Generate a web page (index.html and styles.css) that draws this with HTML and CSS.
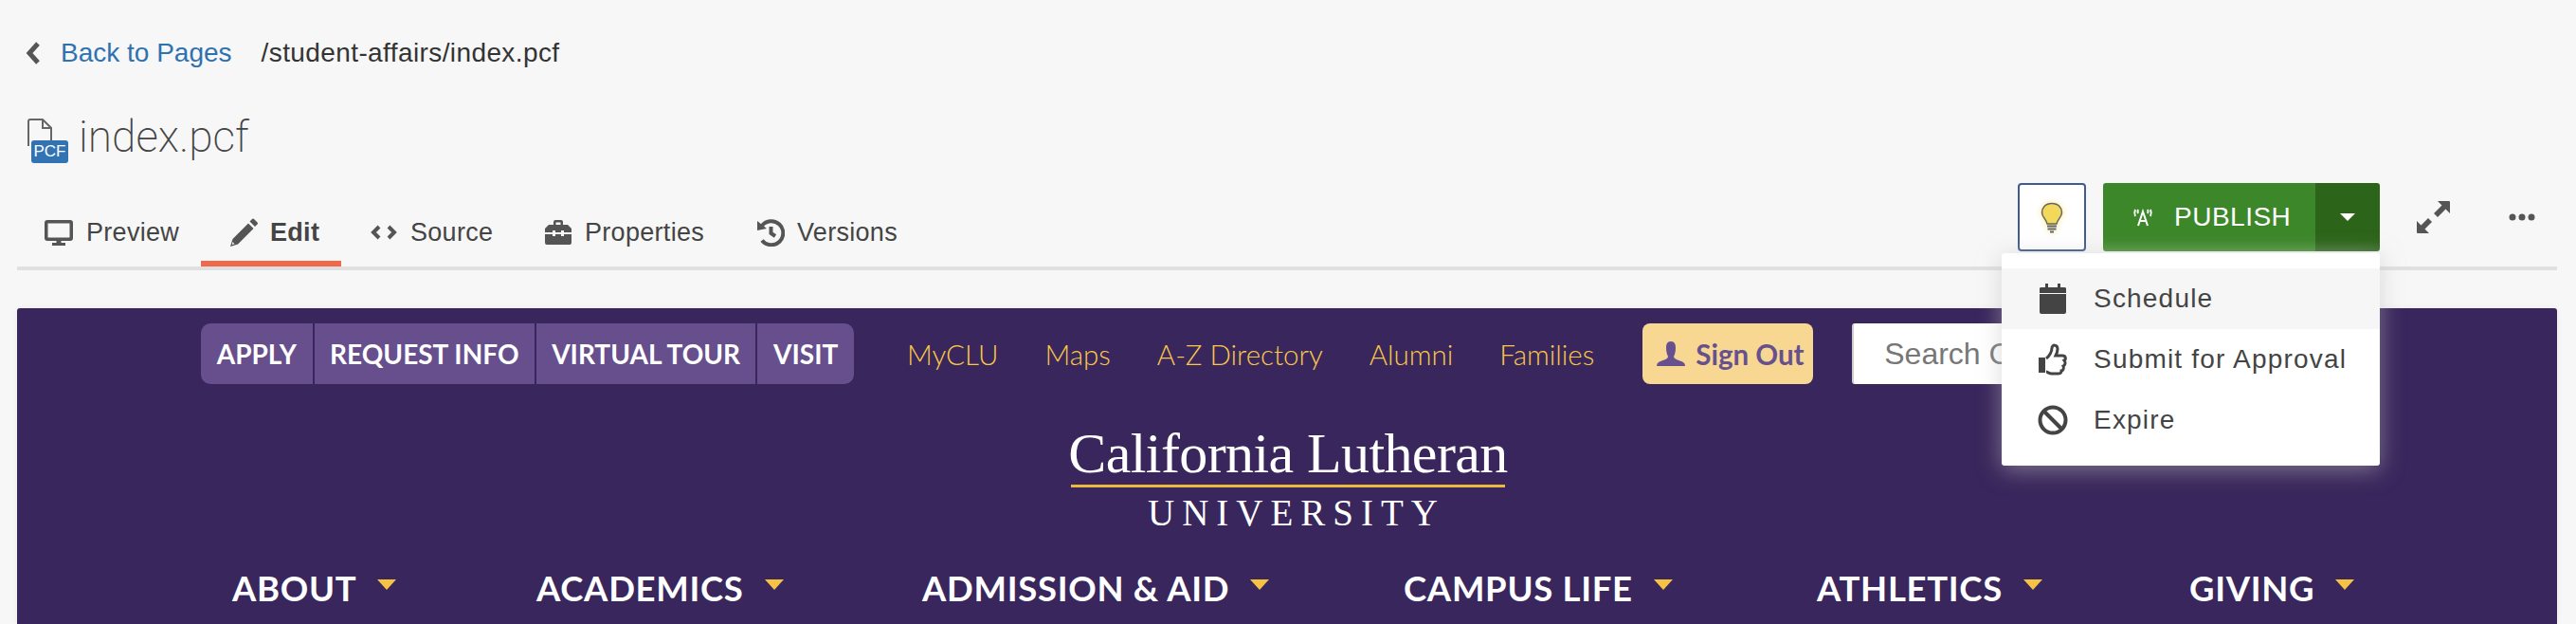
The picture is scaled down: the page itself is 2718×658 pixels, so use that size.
FILE: index.html
```html
<!DOCTYPE html>
<html lang="en">
<head>
  <meta charset="UTF-8" />
  <title>index.pcf</title>
  <link rel="stylesheet" href="styles.css">
</head>
<body>
  <div class="crumbs">
    <svg class="back-icon" viewBox="0 0 18 26"><path d="M14 3 L5 13 L14 23" /></svg>
    <a class="back-link">Back to Pages</a>
    <span class="path">/student-affairs/index.pcf</span>
  </div>

  <div class="title-row">
    <div class="file-icon">
      <svg viewBox="0 0 28 36"><path d="M2 30 V4 Q2 2 4 2 H17 L26 11 V30" /><path d="M17 2 V11 H26" /></svg>
      <span class="file-badge">PCF</span>
    </div>
    <h1 class="title">index.pcf</h1>
  </div>

  <div class="toolbar">
    <ul class="tabs">
      <li class="tab tab-preview">
        <svg viewBox="0 0 30 30"><path d="M3 2 H27 Q30 2 30 5 V21 Q30 24 27 24 H3 Q0 24 0 21 V5 Q0 2 3 2 Z M3.500 5.500 V20.500 H26.500 V5.500 Z M12.500 24 H17.500 V26 H22 V29 H8 V26 H12.500 Z" fill-rule="evenodd" /></svg>
        Preview
      </li>
      <li class="tab tab-edit active">
        <svg viewBox="0 0 30 30"><path d="M21.500 3.500 L24 1 Q25 0 26 1 L29.500 4.500 Q30.500 5.500 29.500 6.500 L27 9 Z" /><path d="M20 5.500 L25.500 11 L9 27.500 L1 30 L3.500 22 Z" /><path class="tip" d="M3.500 25 L5.500 27.200 L2.800 28 Z" /></svg>
        Edit
      </li>
      <li class="tab tab-source">
        <svg class="stroke" viewBox="0 0 30 30"><path d="M10 9 L4 15 L10 21 M20 9 L26 15 L20 21" /></svg>
        Source
      </li>
      <li class="tab tab-props">
        <svg viewBox="0 0 30 30"><path d="M10 7 V4 Q10 2 12 2 H18 Q20 2 20 4 V7 H25 L29 11 V15 H21 V13 H18 V15 H12 V13 H9 V15 H1 V11 L5 7 Z M12.500 4.500 V7 H17.500 V4.500 Z M1 17 H9 V19 H12 V17 H18 V19 H21 V17 H29 V26 Q29 28 27 28 H3 Q1 28 1 26 Z" fill-rule="evenodd" /></svg>
        Properties
      </li>
      <li class="tab tab-versions">
        <svg class="stroke" viewBox="0 0 30 30"><path d="M6 8 A12.500 12.500 0 1 1 6 23.500" /><path d="M15.500 9 V16 L20 19" /><path class="fill" d="M1 3 L11 11 L1 13 Z" /></svg>
        Versions
      </li>
    </ul>

    <div class="actions">
      <button class="bulb-btn">
        <svg viewBox="0 0 24 33"><path class="bulb-glass" d="M12 1.500 C5 1.500 1.500 6.500 1.500 11 C1.500 16 6 18 7 23 H17 C18 18 22.500 16 22.500 11 C22.500 6.500 19 1.500 12 1.500 Z" /><path class="bulb-base" d="M7 25.500 H17 M7.500 28.500 H16.500 M10 31.500 H14" /></svg>
      </button>
      <div class="publish">
        <button class="publish-main">
          <svg viewBox="0 0 24 19"><path d="M7 18 L12 3 L17 18 M9 13 H15" /><path d="M4 1 Q2.500 4.500 4 8 M7 1 Q6 3 7 5 M20 1 Q21.500 4.500 20 8 M17 1 Q18 3 17 5" /></svg>
          PUBLISH
        </button>
        <button class="publish-caret"><span class="caret"></span></button>
        <ul class="publish-menu">
          <li class="menu-item hover">
            <svg viewBox="0 0 32 34"><path d="M8 1 H11 V5 H8 Z M21 1 H24 V5 H21 Z M2 6 Q2 5 4 5 H28 Q30 5 30 6 V11 H2 Z M2 12 H30 V31 Q30 33 28 33 H4 Q2 33 2 31 Z" /></svg>
            Schedule
          </li>
          <li class="menu-item">
            <svg viewBox="0 0 32 34"><path d="M1 15 H8 V31 H1 Z" /><path class="outline" d="M9 16 C12 14 15 9 15 5 C15 1 21 1 21 6 C21 9 20 11 19 13 H26 C30 13 30 17 28 18 C30 20 29 23 27 24 C28 26 27 29 25 29 C25 32 23 32 21 32 H15 C12 32 10 30 9 30" /></svg>
            Submit for Approval
          </li>
          <li class="menu-item">
            <svg class="stroke" viewBox="0 0 32 32"><circle cx="16" cy="16" r="13.500" /><path d="M6.500 6.500 L25.500 25.500" /></svg>
            Expire
          </li>
        </ul>
      </div>
      <svg class="expand-icon" viewBox="0 0 36 36"><path d="M23 1 H35 Q36 1 36 2 V14 L31.500 9.500 L23 18 L19 14 L27.500 5.500 Z" /><path d="M1 22 L5.500 26.500 L13 19 L17 23 L9.500 30.500 L14 35 H2 Q1 35 1 34 Z" /></svg>
      <svg class="more-icon" viewBox="0 0 28 8"><circle cx="4" cy="4" r="3.500" /><circle cx="14" cy="4" r="3.500" /><circle cx="24" cy="4" r="3.500" /></svg>
    </div>
  </div>

  <div class="site">
    <div class="site-top">
      <div class="cta-group">
        <a class="cta cta-apply">APPLY</a>
        <a class="cta cta-info">REQUEST INFO</a>
        <a class="cta cta-tour">VIRTUAL TOUR</a>
        <a class="cta cta-visit">VISIT</a>
      </div>
      <ul class="util-links">
        <li>MyCLU</li>
        <li>Maps</li>
        <li>A-Z Directory</li>
        <li>Alumni</li>
        <li>Families</li>
      </ul>
      <a class="sign-out">
        <svg viewBox="0 0 30 26"><path d="M15 0 C11 0 10 3 10 7 C10 11 11 14 12 16 C12 19 5 20 2 22 Q0 23 0 26 H30 Q30 23 28 22 C25 20 18 19 18 16 C19 14 20 11 20 7 C20 3 19 0 15 0 Z" /></svg>
        Sign Out
      </a>
      <div class="search-box">Search CLU</div>
    </div>

    <div class="logo">
      <div class="logo-name">California Lutheran</div>
      <div class="logo-rule"></div>
      <div class="logo-sub">UNIVERSITY</div>
    </div>

    <ul class="main-nav">
      <li class="nav-about">ABOUT <span class="nav-caret"></span></li>
      <li class="nav-academics">ACADEMICS <span class="nav-caret"></span></li>
      <li class="nav-admission">ADMISSION &amp; AID <span class="nav-caret"></span></li>
      <li class="nav-campus">CAMPUS LIFE <span class="nav-caret"></span></li>
      <li class="nav-athletics">ATHLETICS <span class="nav-caret"></span></li>
      <li class="nav-giving">GIVING <span class="nav-caret"></span></li>
    </ul>
  </div>
</body>
</html>
```

FILE: styles.css
```css
* {
  box-sizing: border-box;
}

body {
  margin: 0;
  height: 658px;
  overflow: hidden;
  background: #f7f7f7;
  color: #444;
  font-family: "Liberation Sans", Arial, sans-serif;
}

ul {
  list-style: none;
  margin: 0;
  padding: 0;
}

button {
  border: none;
  padding: 0;
  font-family: inherit;
}

/* breadcrumb */
.crumbs {
  display: flex;
  align-items: center;
  height: 40px;
  margin-top: 36px;
  padding-left: 26px;
  font-size: 28px;
}

.back-icon {
  width: 18px;
  height: 26px;
  fill: none;
  stroke: #555;
  stroke-width: 5;
}

.back-link {
  margin-left: 20px;
  color: #2f72b0;
}

.path {
  margin-left: 31px;
  color: #333;
  letter-spacing: 0.4px;
}

/* title */
.title-row {
  display: flex;
  align-items: center;
  height: 60px;
  margin-top: 39px;
  padding-left: 28px;
}

.file-icon {
  position: relative;
  width: 44px;
  height: 48px;
  margin-top: 6px;
}

.file-icon svg {
  width: 28px;
  height: 36px;
  fill: none;
  stroke: #666;
  stroke-width: 2;
}

.file-badge {
  position: absolute;
  left: 5px;
  top: 24px;
  width: 39px;
  height: 24px;
  background: #3173b3;
  border-radius: 3px;
  color: #fff;
  font-size: 17px;
  line-height: 24px;
  text-align: center;
}

.title {
  margin: 0 0 2px 11px;
  font-family: Roboto, sans-serif;
  font-weight: 200;
  font-size: 46px;
  color: #444;
}

/* tabs and actions */
.toolbar {
  position: relative;
  display: flex;
  justify-content: space-between;
  height: 110px;
  margin: 0 20px 0 18px;
  border-bottom: 4px solid #e0e0e0;
}

.tabs {
  display: flex;
  align-items: flex-end;
}

.tab {
  display: flex;
  align-items: center;
  gap: 13px;
  height: 72px;
  padding-left: 30px;
  font-size: 27px;
  letter-spacing: 0.3px;
  color: #444;
}

.tab svg {
  width: 30px;
  height: 30px;
  fill: #555;
}

.tab svg.stroke {
  fill: none;
  stroke: #555;
  stroke-width: 4;
}

.tab svg .fill {
  fill: #555;
  stroke: none;
}

.tab svg .tip {
  fill: #f7f7f7;
}

.tab-preview {
  width: 194px;
  padding-left: 29px;
  gap: 14px;
}

.tab-edit {
  width: 148px;
}

.tab-edit.active {
  font-weight: bold;
  box-shadow: inset 0 -6px 0 #f0694a;
}

.tab-source {
  width: 184px;
}

.tab-props {
  width: 224px;
}

.actions {
  display: flex;
  align-items: flex-start;
  margin-top: 18px;
}

.bulb-btn {
  display: flex;
  align-items: center;
  justify-content: center;
  width: 72px;
  height: 72px;
  margin-right: 18px;
  background: #fff;
  border: 2px solid #3e5c8f;
  border-radius: 4px;
}

.bulb-btn svg {
  width: 24px;
  height: 33px;
  filter: drop-shadow(0 0 3px #f7e58a);
}

.bulb-glass {
  fill: #f2d95c;
  stroke: #666;
  stroke-width: 1.500;
}

.bulb-base {
  fill: none;
  stroke: #666;
  stroke-width: 2;
}

.publish {
  position: relative;
  display: flex;
  width: 292px;
  height: 72px;
}

.publish-main {
  display: flex;
  align-items: center;
  gap: 21px;
  width: 224px;
  height: 72px;
  padding-left: 30px;
  background: linear-gradient(#3c872a 85%, #4c923a);
  border-radius: 3px 0 0 3px;
  color: #fff;
  font-size: 28px;
  letter-spacing: 0.5px;
}

.publish-main svg {
  width: 24px;
  height: 19px;
  fill: none;
  stroke: #fff;
  stroke-width: 2;
}

.publish-caret {
  display: flex;
  align-items: center;
  justify-content: center;
  width: 68px;
  height: 72px;
  background: linear-gradient(#2c6519 85%, #3f7030);
  border-radius: 0 3px 3px 0;
}

.caret {
  width: 0;
  height: 0;
  border-left: 8px solid transparent;
  border-right: 8px solid transparent;
  border-top: 8px solid #fff;
}

.publish-menu {
  position: absolute;
  z-index: 5;
  top: 74px;
  right: 0;
  width: 399px;
  height: 224px;
  padding: 16px 0;
  background: #fff;
  border-radius: 3px;
  box-shadow: 0 4px 24px rgba(190, 190, 190, 0.55);
}

.menu-item {
  display: flex;
  align-items: center;
  gap: 27px;
  height: 64px;
  padding-left: 38px;
  font-size: 28px;
  letter-spacing: 1.2px;
  color: #444;
}

.menu-item.hover {
  background: #f6f6f6;
}

.menu-item svg {
  width: 32px;
  height: 34px;
  flex-shrink: 0;
  fill: #444;
}

.menu-item svg .outline {
  fill: none;
  stroke: #444;
  stroke-width: 3;
}

.menu-item svg.stroke {
  fill: none;
  stroke: #444;
  stroke-width: 4;
}

.expand-icon {
  width: 36px;
  height: 36px;
  margin: 18px 0 0 38px;
  fill: #555;
}

.more-icon {
  width: 28px;
  height: 8px;
  margin: 32px 23px 0 62px;
  fill: #555;
}

/* the embedded site */
.site {
  height: 333px;
  margin: 40px 20px 0 18px;
  padding-top: 16px;
  background: #39265c;
  border-radius: 3px 3px 0 0;
  box-shadow: 0 0 6px rgba(0, 0, 0, 0.06);
}

.site-top {
  display: flex;
  height: 64px;
  padding-left: 194px;
}

.cta-group {
  display: flex;
  gap: 2px;
  width: 689px;
  border-radius: 10px;
  overflow: hidden;
}

.cta {
  display: flex;
  align-items: center;
  justify-content: center;
  background: #674f8d;
  color: #fff;
  font-family: Lato, sans-serif;
  font-weight: 700;
  font-size: 28px;
  white-space: nowrap;
}

.cta-apply {
  width: 118px;
}

.cta-info {
  width: 233px;
}

.cta-tour {
  width: 232px;
}

.cta-visit {
  width: 102px;
}

.util-links {
  display: flex;
  align-items: center;
  gap: 49px;
  margin-left: 56px;
  color: #f9c847;
  font-family: Lato, sans-serif;
  font-weight: 300;
  font-size: 29.500px;
  white-space: nowrap;
}

.sign-out {
  display: flex;
  align-items: center;
  gap: 11px;
  width: 180px;
  margin-left: 51px;
  padding-left: 15px;
  background: #f8d792;
  border-radius: 8px;
  color: #67508e;
  font-family: Lato, sans-serif;
  font-weight: 700;
  font-size: 29.500px;
  white-space: nowrap;
}

.sign-out svg {
  width: 30px;
  height: 26px;
  flex-shrink: 0;
  fill: #67508e;
}

.search-box {
  width: 300px;
  margin-left: 41px;
  padding-left: 32px;
  background: #fff;
  border-left: 2px solid #ccc;
  border-radius: 3px;
  color: #777;
  font-size: 32px;
  line-height: 64px;
  white-space: nowrap;
}

.logo {
  display: flex;
  flex-direction: column;
  align-items: center;
  width: 458px;
  margin: 43px 0 0 1112px;
  color: #fff;
  font-family: "Liberation Serif", serif;
}

.logo-name {
  font-size: 60px;
  line-height: 60px;
  letter-spacing: -0.6px;
  white-space: nowrap;
}

.logo-rule {
  width: 458px;
  height: 3px;
  margin-top: 3px;
  background: #eeb83f;
}

.logo-sub {
  margin-top: 7px;
  padding-left: 18px;
  font-size: 39px;
  line-height: 39px;
  letter-spacing: 8px;
}

.main-nav {
  display: flex;
  margin-top: 40px;
  padding-left: 227px;
  color: #fff;
  font-family: Lato, sans-serif;
  font-weight: 700;
  font-size: 36.500px;
  letter-spacing: 0.7px;
  line-height: 40px;
}

.main-nav li {
  display: flex;
  white-space: nowrap;
}

.nav-caret {
  width: 0;
  height: 0;
  margin: 11px 0 0 22px;
  border-left: 10px solid transparent;
  border-right: 10px solid transparent;
  border-top: 11px solid #f5c244;
}

.nav-about {
  width: 321px;
}

.nav-academics {
  width: 407px;
}

.nav-admission {
  width: 508px;
}

.nav-campus {
  width: 436px;
}

.nav-athletics {
  width: 393px;
}
```
